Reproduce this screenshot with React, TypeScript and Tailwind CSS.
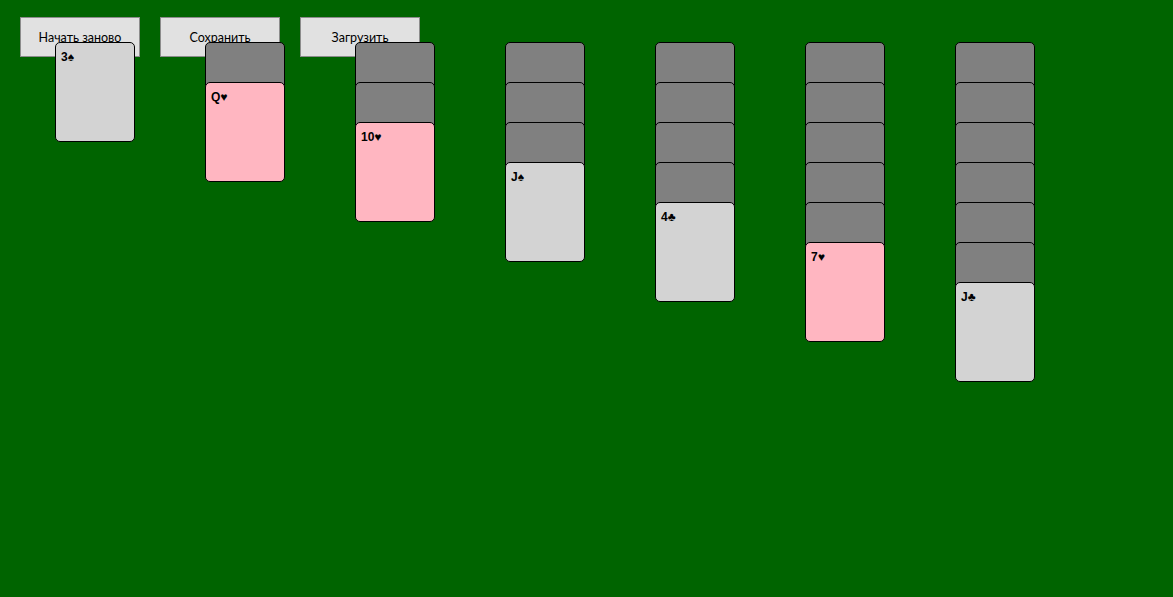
const columns = [
  { hidden: 0, rank: "3", suit: "♠", red: false },
  { hidden: 1, rank: "Q", suit: "♥", red: true },
  { hidden: 2, rank: "10", suit: "♥", red: true },
  { hidden: 3, rank: "J", suit: "♠", red: false },
  { hidden: 4, rank: "4", suit: "♣", red: false },
  { hidden: 5, rank: "7", suit: "♥", red: true },
  { hidden: 6, rank: "J", suit: "♣", red: false },
];

const buttons = ["Начать заново", "Сохранить", "Загрузить"];

export default function App() {
  return (
    <div className="min-h-[597px] w-full bg-[#006400] overflow-hidden">
      {/* Controls */}
      <div className="flex gap-[20px] pl-[20px] pt-[17px]">
        {buttons.map((b) => (
          <button
            key={b}
            className="w-[120px] h-[40px] pt-[2px] bg-[#e1e1e1] border border-[#8c8c8c] text-[12.5px] text-black font-['Lato',sans-serif]"
          >
            {b}
          </button>
        ))}
      </div>

      {/* Tableau */}
      <div className="flex gap-[70px] pl-[55px] -mt-[15px]">
        {columns.map((c, i) => (
          <div key={i} className="w-[80px] flex flex-col">
            {Array.from({ length: c.hidden }).map((_, j) => (
              <div
                key={j}
                className={`relative h-[100px] w-[80px] shrink-0 rounded-[5px] border border-black bg-[#808080] ${j > 0 ? "-mt-[60px]" : ""}`}
              />
            ))}
            <div
              className={`relative h-[100px] w-[80px] shrink-0 rounded-[5px] border border-black px-[5px] pt-[5px] text-[12px] leading-[18px] font-bold text-black font-['Liberation_Sans',sans-serif] ${
                c.red ? "bg-[#ffb6c1]" : "bg-[#d3d3d3]"
              } ${c.hidden > 0 ? "-mt-[60px]" : ""}`}
            >
              {c.rank}
              {c.suit}
            </div>
          </div>
        ))}
      </div>
    </div>
  );
}
